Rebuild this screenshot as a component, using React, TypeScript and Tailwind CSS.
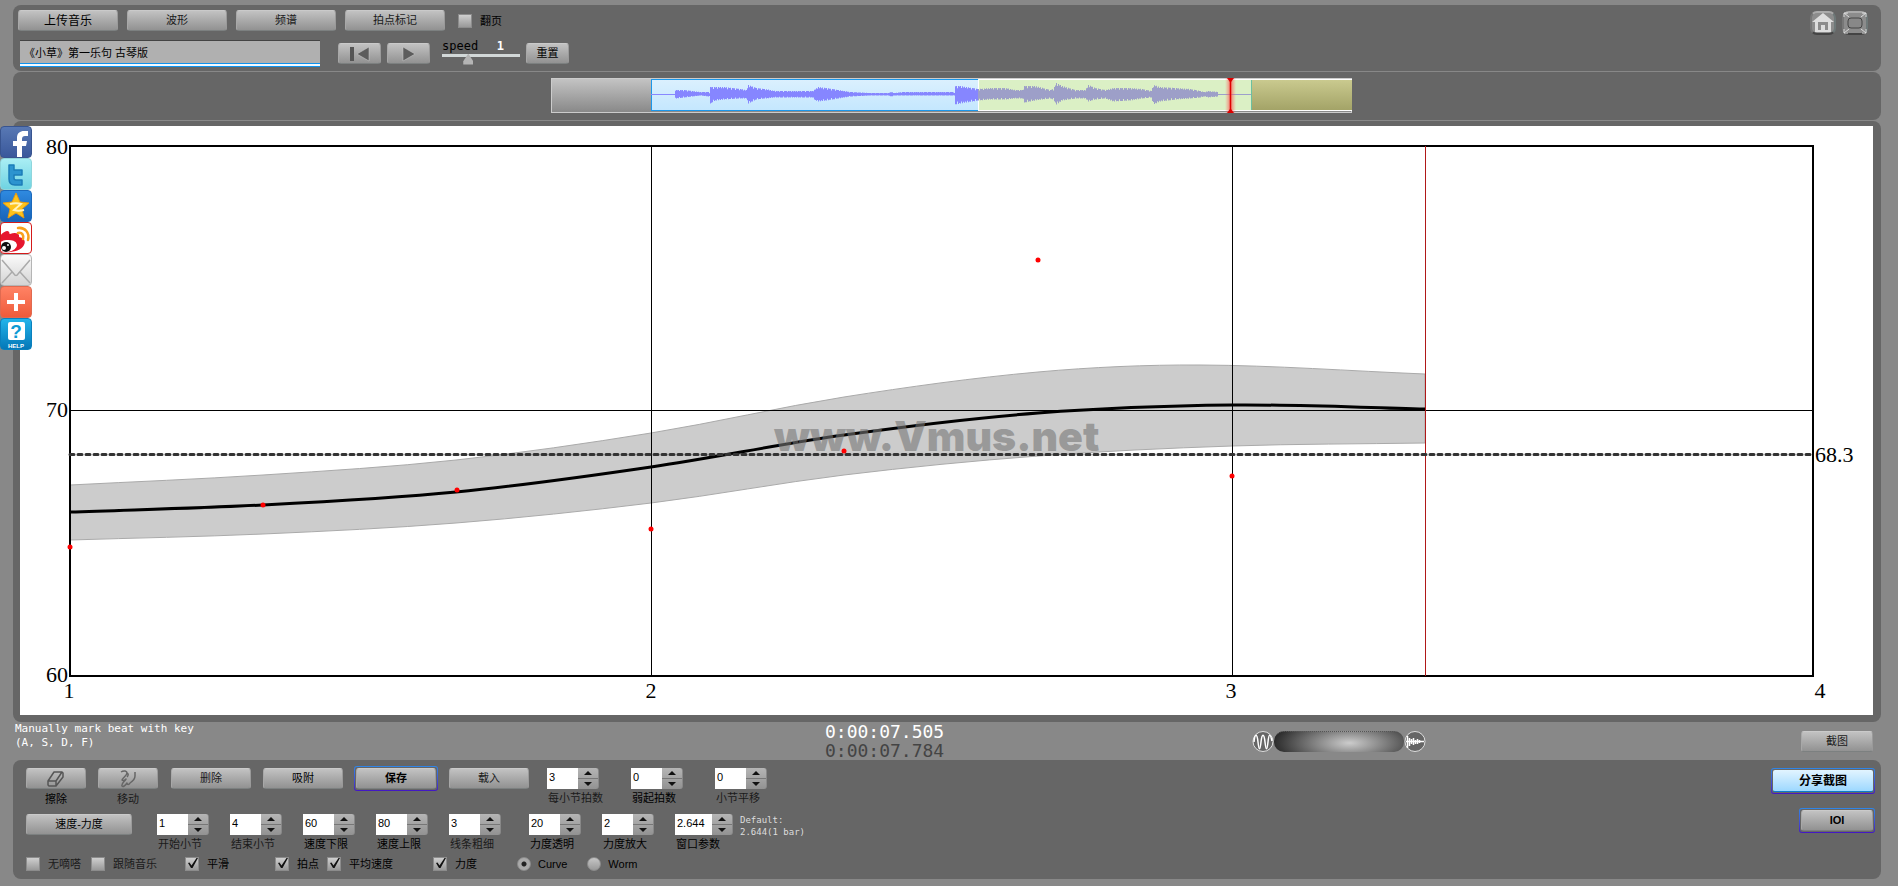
import { useState, type ReactNode } from "react";
import clsx from "clsx";

type Point = [number, number];

const MONO = "font-['DejaVu_Sans_Mono',monospace]";

// tempo chart, in chart units
const TEMPO: Point[] = [[50, 386], [243, 379], [436, 366], [631, 341], [824, 309], [1018, 287], [1212, 279], [1405, 283]];
const UPPER: Point[] = [[50, 359], [243, 349], [436, 334], [631, 307], [824, 271], [1018, 246], [1180, 239], [1405, 248]];
const LOWER: Point[] = [[50, 414], [243, 408], [436, 397], [631, 377], [824, 349], [1018, 330], [1212, 320], [1405, 317]];
const BEATS: Point[] = [[50, 421], [243, 379], [437, 364], [631, 403], [824, 325], [1018, 134], [1212, 350]];

// x, height above the axis, height below the axis
const ENVELOPE: [number, number, number][] = [
  [124, 4, 4], [132, 4, 3], [149, 2, 1], [157, 2, 2], [158, 1, 2], [159, 7, 9], [164, 7, 6], [172, 7, 5], [189, 5, 4], [195, 4, 4], [197, 9, 9],
  [205, 6, 5], [214, 5, 4], [224, 3, 3], [240, 3, 3], [261, 3, 3], [264, 5, 6], [267, 7, 7], [275, 6, 6], [287, 4, 4], [299, 2, 2], [319, 1, 1],
  [337, 1, 1], [340, 2, 2], [343, 1, 1], [352, 2, 1], [402, 2, 1], [403, 1, 1], [404, 8, 10], [409, 8, 9], [427, 5, 6], [439, 6, 5], [454, 6, 5],
  [464, 4, 4], [471, 4, 4], [473, 8, 8], [484, 8, 6], [499, 4, 4], [502, 5, 5], [505, 11, 10], [511, 8, 6], [524, 4, 4], [534, 4, 4], [537, 9, 7],
  [544, 6, 5], [554, 4, 4], [562, 6, 7], [579, 6, 6], [591, 5, 4], [600, 3, 3], [602, 9, 10], [609, 7, 7], [624, 6, 5], [639, 5, 4], [649, 3, 3],
  [653, 2, 2], [657, 3, 3], [667, 2, 2],
];

function spline(points: Point[]) {
  const slope = points.map((_, i) => {
    const a = points[Math.max(i - 1, 0)];
    const b = points[Math.min(i + 1, points.length - 1)];
    return (b[1] - a[1]) / (b[0] - a[0]);
  });
  return points.slice(1).map(([x, y], i) => {
    const [px, py] = points[i];
    const dx = (x - px) / 3;
    return `C${px + dx},${py + slope[i] * dx} ${x - dx},${y - slope[i + 1] * dx} ${x},${y}`;
  }).join(" ");
}

function wavePath() {
  let d = "";
  for (let i = 1; i < ENVELOPE.length; i++) {
    const [x0, u0, d0] = ENVELOPE[i - 1];
    const [x1, u1, d1] = ENVELOPE[i];
    for (let x = x0; x < x1; x++) {
      const t = (x - x0) / (x1 - x0);
      const grain = x % 2 ? 1 : 0.84 + 0.14 * Math.sin(x * 1.7);
      const up = (u0 + (u1 - u0) * t) * grain;
      const down = (d0 + (d1 - d0) * t) * grain;
      d += `M${x},${16 - up}h1V${16.5 + down}h-1z`;
    }
  }
  return d;
}

const BAND = `M${UPPER[0].join()} ${spline(UPPER)} L${LOWER[LOWER.length - 1].join()} ${spline([...LOWER].reverse())}Z`;
const WAVE = wavePath();

function Button({ children, className, ...rest }: { children: ReactNode; className?: string; "aria-label"?: string; onClick?: () => void }) {
  return (
    <button
      type="button"
      {...rest}
      className={clsx(
        "flex h-[21px] shrink-0 items-center justify-center rounded-[3px] border border-t-[#cacaca] border-r-[#9a9a9a] border-b-[#7c8080] border-l-[#a8a8a8] bg-linear-to-b from-[#c2c2c2] to-[#929292] leading-none hover:brightness-110",
        className ?? "w-[100px]",
      )}
    >
      {children}
    </button>
  );
}

function Ring({ children }: { children: ReactNode }) {
  return <div className="rounded-[3px] bg-linear-to-b from-[#2e86e8] to-[#4314c4] p-px"><div className="rounded-[2px] bg-[#666] p-px">{children}</div></div>;
}

function Check({ label, checked, className, dim }: { label: string; checked?: boolean; className?: string; dim?: boolean }) {
  return (
    <label className={clsx("relative flex items-center gap-2 leading-[14px]", dim && "text-[#1a1a1a]", className)}>
      <input type="checkbox" defaultChecked={checked} className="peer size-[14px] appearance-none border border-[#8c8c8c] bg-linear-to-b from-[#cfcfcf] to-[#999]" />
      <svg viewBox="0 0 14 14" className="pointer-events-none absolute left-0 top-0 hidden size-[14px] overflow-visible peer-checked:block">
        <path d="M3 6l1.500-.5 2 3L11.500 1h1.500L7.500 11h-1.500z" fill="#111" />
      </svg>
      {label}
    </label>
  );
}

function Radio({ label, checked, onChange, className }: { label: string; checked: boolean; onChange: () => void; className?: string }) {
  return (
    <label className={clsx("flex items-center gap-[7px] leading-[14px]", className)}>
      <input
        type="radio"
        name="view"
        checked={checked}
        onChange={onChange}
        className="size-[14px] appearance-none rounded-full border border-[#8c8c8c] bg-linear-to-b from-[#c6c6c6] to-[#999] checked:bg-[radial-gradient(circle,#222_2px,#aaa_3px)]"
      />
      {label}
    </label>
  );
}

function Stepper({ label, initial, step = 1, className, wide, dim }: { label: string; initial: string; step?: number; className?: string; wide?: boolean; dim?: boolean }) {
  const [value, setValue] = useState(initial);
  const bump = (by: number) => setValue((v) => String(Number((Number(v) + by).toFixed(3))));
  const arrow = "flex h-[10px] w-full items-center justify-center";
  return (
    <div className={clsx("shrink-0", className ?? "w-[73px]")}>
      <div className="flex h-[21px]">
        <input
          id={label}
          value={value}
          onChange={(e) => setValue(e.target.value)}
          className={clsx("h-[21px] bg-white pb-1 pl-[2px] text-[11px] leading-none outline-none", wide ? "w-[37px]" : "w-[31px]")}
        />
        <div className="flex w-[21px] flex-col justify-between rounded-r-[3px] border-r border-[#888] bg-linear-to-b from-[#b5b5b5] to-[#929292]">
          <button type="button" aria-label={`${label} +`} onClick={() => bump(step)} className={arrow}>
            <svg width="8" height="4"><path d="M4 0l4 4H0z" fill="#111" /></svg>
          </button>
          <div className="h-px bg-[#777]" />
          <button type="button" aria-label={`${label} -`} onClick={() => bump(-step)} className={arrow}>
            <svg width="8" height="4"><path d="M0 0h8L4 4z" fill="#111" /></svg>
          </button>
        </div>
      </div>
      <label htmlFor={label} className={clsx("mt-[3px] block pl-px whitespace-nowrap leading-[13px]", dim && "text-[#1a1a1a]")}>{label}</label>
    </div>
  );
}

function Overview() {
  return (
    <svg viewBox="0 0 801 35" className="block w-[801px] max-w-full">
      <defs>
        <linearGradient id="idle" x2="0" y2="1"><stop stopColor="#c4c4c4" /><stop offset="1" stopColor="#888" /></linearGradient>
        <linearGradient id="sky" x2="0" y2="1"><stop stopColor="#dbf0fe" /><stop offset="1" stopColor="#c4e7fe" /></linearGradient>
        <linearGradient id="olive" x2="0" y2="1"><stop stopColor="#cbcb90" /><stop offset="1" stopColor="#a2a266" /></linearGradient>
        <linearGradient id="glow"><stop stopColor="#f66" stopOpacity="0" /><stop offset=".5" stopColor="#f44" /><stop offset="1" stopColor="#f66" stopOpacity="0" /></linearGradient>
        <clipPath id="head"><path d="M0 0h427v35H0z" /></clipPath>
        <clipPath id="tail"><path d="M427 0h374v35H427z" /></clipPath>
      </defs>
      <rect x=".5" y=".5" width="800" height="34" fill="url(#idle)" stroke="#ccc" />
      <rect x="100.500" y="1.500" width="327" height="31" fill="url(#sky)" stroke="#1c97ea" />
      <rect x="427" y="1" width="273" height="32" fill="#dbf0c5" />
      <rect x="700" y="1" width="101" height="32" fill="url(#olive)" />
      <path d="M427.500 33V1.500H801M427 32.500H801" fill="none" stroke="#fff" />
      <path d="M700.500 2v30" stroke="#6cc0a0" />
      <path d="M100 16.500H427" stroke="#8888ff" />
      <path d="M427 16.500H700" stroke="#9d9fcb" />
      <path d={WAVE} fill="#8686ff" clipPath="url(#head)" />
      <path d={WAVE} fill="#9d9fc8" clipPath="url(#tail)" />
      <rect x="674" y="0" width="11" height="35" fill="url(#glow)" opacity=".7" />
      <path d="M679.500 0v35" stroke="#e00000" strokeWidth="1.500" />
      <path d="M676 0h7l-3 4h-1zM676 35h7l-3-4h-1z" fill="#d00" />
    </svg>
  );
}

function TempoChart() {
  return (
    <svg viewBox="0 0 1853 589" className="block h-auto w-full bg-white">
      <path d={BAND} fill="#ccc" stroke="#aaa" />
      <path d="M50 284.500H1793M631.500 20V550M1212.500 20V550" stroke="#000" />
      <rect x="50" y="20" width="1743" height="530" fill="none" stroke="#000" strokeWidth="2" />
      <path d={`M${TEMPO[0].join()} ${spline(TEMPO)}`} fill="none" stroke="#000" strokeWidth="3" />
      <text x="754" y="325" fill="#777" fillOpacity=".6" fontSize="41" fontWeight="900" fontFamily="Inter, sans-serif">www.Vmus.net</text>
      <path d="M1405.500 20V550" stroke="#b01818" />
      <path d="M50 328.500H1793" stroke="#333" strokeWidth="3" strokeDasharray="4 4" strokeLinecap="round" />
      {BEATS.map(([x, y]) => <circle key={x} cx={x} cy={y} r="2.500" fill="#f00" />)}
      <g fontFamily="Liberation Serif, serif" fontSize="22">
        <g textAnchor="end">
          <text x="48" y="28">80</text>
          <text x="48" y="291">70</text>
          <text x="48" y="556">60</text>
        </g>
        <g textAnchor="middle">
          <text x="49" y="572">1</text>
          <text x="631" y="572">2</text>
          <text x="1211" y="572">3</text>
          <text x="1800" y="572">4</text>
        </g>
        <text x="1795" y="336">68.3</text>
      </g>
    </svg>
  );
}

const SHARE: { name: string; tile: string; art: ReactNode }[] = [
  {
    name: "Facebook",
    tile: "bg-linear-to-b from-[#5878b4] to-[#3a589b] border-[#38548f]",
    art: <path d="M17 31V20h-4v-5h4v-3c0-5 3-7 7-7h4v5h-3c-2 0-3 1-3 3v2h5l-1 5h-4v11z" fill="#fff" />,
  },
  {
    name: "Twitter",
    tile: "bg-linear-to-b from-[#a9eef4] to-[#6fd3e2] border-[#8fd6dc]",
    art: <path d="M9 7h5v5h8v5h-8v3c0 2 1 2 2 2h6v5h-7c-4 0-6-2-6-6z" fill="#2c94cf" stroke="#1b7cb8" strokeLinejoin="round" strokeWidth="1.500" />,
  },
  {
    name: "Qzone",
    tile: "bg-linear-to-b from-[#2f8ae0] to-[#1763b8] border-[#1b68bb]",
    art: (
      <>
        <path d="M16 3l4 9 9 1-7 6 2 9-8-5-8 5 2-9-7-6 9-1z" fill="#fdc31c" stroke="#e89a10" />
        <path d="M10 14c4-1 8-1 11 0l-7 6c3 1 6 1 10 0" fill="none" stroke="#fff3c0" strokeWidth="2" />
      </>
    ),
  },
  {
    name: "Weibo",
    tile: "bg-white border-[#d41a1a]",
    art: (
      <>
        <path d="M0 14c4-5 8-6 9-4 1 1 0 2 1 2 5-2 10-1 9 3 5 1 7 4 5 8-3 6-12 8-24 7z" fill="#e6162d" />
        <ellipse cx="7" cy="24" rx="10" ry="6" fill="#fff" transform="rotate(-8 7 24)" />
        <circle cx="6" cy="25" r="5" fill="#111" />
        <circle cx="4" cy="26" r="2" fill="#fff" />
        <circle cx="8" cy="23" r="1" fill="#fff" />
        <path d="M18 6c7-1 12 5 10 12M18 11c4-1 6 2 5 6" fill="none" stroke="#f8a01c" strokeWidth="2.500" strokeLinecap="round" />
      </>
    ),
  },
  {
    name: "Mail",
    tile: "bg-linear-to-b from-[#fafafa] to-[#d4d4d4] border-[#b5b5b5]",
    art: <path d="M2 6l12 14c1 2 3 2 4 0L30 6M2 29l10-11M30 29L20 18" fill="none" stroke="#aaa" strokeWidth="1.500" />,
  },
  {
    name: "More",
    tile: "bg-linear-to-b from-[#ff8264] to-[#ee5a3a] border-[#e06a50]",
    art: <path d="M14 7h4v7h7v4h-7v7h-4v-7H7v-4h7z" fill="#fff" />,
  },
  {
    name: "Help",
    tile: "bg-linear-to-b from-[#22b4ea] to-[#0578b8] border-[#0a80bd]",
    art: (
      <>
        <rect x="8" y="4" width="17" height="18" rx="2" fill="#fff" />
        <text x="16" y="20" textAnchor="middle" fontSize="19" fontWeight="700" fill="#0d9ad4">?</text>
        <text x="16" y="30" textAnchor="middle" fontSize="6" fontWeight="700" fill="#fff">HELP</text>
      </>
    ),
  },
];

function ShareBar() {
  return (
    <nav className="absolute left-0 top-[126px] flex flex-col">
      {SHARE.map(({ name, tile, art }) => (
        <a key={name} href={`#${name.toLowerCase()}`} aria-label={name} className={clsx("size-8 overflow-hidden rounded-[4px] border", tile)}>
          <svg viewBox="1 1 30 30" className="size-full">{art}</svg>
        </a>
      ))}
    </nav>
  );
}

function CornerLink({ name, children }: { name: string; children: ReactNode }) {
  return (
    <a href={`#${name}`} aria-label={name} className="h-6 w-[26px] rounded-[7px] border-2 border-t-[#aaa] border-r-[#6e7878] border-b-[#444] border-l-[#777] bg-[#8c8c8c]">
      <svg viewBox="0 0 22 20" className="size-full overflow-visible">{children}</svg>
    </a>
  );
}

export default function App() {
  const [view, setView] = useState("Curve");
  const panel = "rounded-lg bg-[#666]";

  return (
    <div className="relative flex min-h-screen flex-col bg-[#888] pt-[5px] pr-[17px] pb-[7px] pl-[13px] font-['Liberation_Sans','Noto_Sans_CJK_SC',sans-serif] text-[11px] text-black">
      <header className={clsx(panel, "flex items-start justify-between px-[5px] pt-[5px] pb-1")}>
        <div>
          <div className="flex items-center gap-[9px]">
            <Button className="w-[100px] text-[12px]">上传音乐</Button>
            <Button className="w-[100px] text-[#1a1a1a]">波形</Button>
            <Button className="w-[100px] text-[#1a1a1a]">频谱</Button>
            <Button className="w-[100px] text-[#1a1a1a]">拍点标记</Button>
            <Check label="翻页" className="ml-1" />
          </div>
          <div className="mt-[9px] flex h-[27px] items-center pl-[2px]">
            <input
              aria-label="曲名"
              defaultValue="《小草》第一乐句 古琴版"
              className="h-[27px] w-[300px] border-t border-b border-t-[#444] border-b-[#0f93ee] bg-[#b0b0b0] px-1 pb-[3px] text-[11px] shadow-[inset_0_-2px_#f4faff,inset_0_-3px_#0f93ee] outline-none"
            />
            <Button className="ml-[18px] w-[43px]" aria-label="回到开头">
              <svg width="22" height="16"><path d="M1 1h4v14H1z" fill="#555" /><path d="M20 1v14L8 8z" fill="#5c5c5c" stroke="#ccc" strokeWidth=".5" /></svg>
            </Button>
            <Button className="ml-[6px] w-[43px]" aria-label="播放">
              <svg width="14" height="16"><path d="M1 1v14l12-7z" fill="#5c5c5c" stroke="#ccc" strokeWidth=".5" /></svg>
            </Button>
            <div className="ml-3 w-[78px] pb-1">
              <div className={clsx(MONO, "flex justify-between pr-4 text-[12px] leading-[15px]")}>
                <label htmlFor="speed">speed</label>
                <output className="font-bold text-white">1</output>
              </div>
              <input
                id="speed"
                type="range"
                min="0"
                max="3.2"
                step="0.1"
                defaultValue="1"
                className="block h-[11px] w-full appearance-none bg-[linear-gradient(#d2d8d8,#d2d8d8)] bg-[length:100%_3px] bg-top bg-no-repeat [&::-webkit-slider-thumb]:h-[11px] [&::-webkit-slider-thumb]:w-[10px] [&::-webkit-slider-thumb]:appearance-none [&::-webkit-slider-thumb]:bg-[#b4b4b4] [&::-webkit-slider-thumb]:[clip-path:polygon(50%_0,100%_70%,100%_100%,0_100%,0_70%)]"
              />
            </div>
            <Button className="ml-[6px] w-[43px]">重置</Button>
          </div>
        </div>
        <div className="flex gap-[6px] pt-px pr-2">
          <CornerLink name="home">
            <path d="M11 0L0 9h3v10h16V9h3zM6 9h10v8h-3v-5H9v5H6z" fill="#ddd" fillRule="evenodd" />
          </CornerLink>
          <CornerLink name="fullscreen">
            <rect x="4" y="5" width="14" height="10" rx="3" fill="#888" stroke="#444" />
            <path d="M0 0l5 4M0 4V0h4M22 0l-5 4M18 0h4v4M0 20l5-4M0 16v4h4M22 20l-5-4M18 20h4v-4" fill="none" stroke="#ddd" />
          </CornerLink>
        </div>
      </header>

      <section className={clsx(panel, "mt-px flex h-[48px] items-start justify-center pt-[6px] pl-[9px]")}>
        <Overview />
      </section>

      <main className={clsx(panel, "mt-px pt-[5px] pr-2 pb-[7px] pl-[7px]")}>
        <TempoChart />
      </main>

      <div className="grid h-[38px] grid-cols-[812fr_427fr_629fr]">
        <p className={clsx(MONO, "pl-[2px] text-[11px] leading-[14px] text-white")}>Manually mark beat with key<br />(A, S, D, F)</p>
        <div className={clsx(MONO, "text-[18px] leading-[19px]")}>
          <p className="text-white">0:00:07.505</p>
          <p className="text-[#444]">0:00:07.784</p>
        </div>
        <div className="flex items-center justify-between pr-2">
          <div className="flex items-center">
            <svg width="22" height="23" viewBox="0 0 22 23" className="shrink-0">
              <circle cx="11" cy="11.500" r="10" fill="#666" stroke="#ddd" />
              <path d="M2 12C3 3 5 3 6 12s2 9 3 0 3-9 4 0 2 9 3 0 2-9 4-1" fill="none" stroke="#fff" strokeWidth="1.500" />
            </svg>
            <div className="h-[21px] w-[130px] rounded-[10px] border-t border-dotted border-[#555] bg-[radial-gradient(ellipse_80px_28px_at_58%_55%,#ccc,#888_40%,#222)]" />
            <svg width="22" height="23" viewBox="0 0 22 23" className="shrink-0">
              <circle cx="11" cy="11.500" r="10" fill="#666" stroke="#ddd" />
              <path d="M3.500 6v12M5.500 8v8M7.500 9v5M9.500 8v7M11.500 10v4M13.500 9v5M15.500 10v3M2 11.500h18" stroke="#fff" strokeWidth="1.500" />
            </svg>
          </div>
          <Button className="w-[72px] text-[#1a1a1a]">截图</Button>
        </div>
      </div>

      <footer className={clsx(panel, "flex items-start justify-between pt-[6px] pr-[6px] pb-2 pl-[13px]")}>
        <div className="pt-[2px]">
          <div className="flex h-[38px] items-start">
            <div className="w-[60px] text-center leading-[13px]">
              <Button className="mb-1 w-[60px]" aria-label="擦除">
                <svg width="18" height="16" fill="none" stroke="#555" strokeWidth="1.500" strokeLinejoin="round"><path d="M7 1h8L9 10H1zM1 10v4l1 1h7l7-9V2l-1-1M9 10v5" /></svg>
              </Button>
              擦除
            </div>
            <div className="ml-3 w-[60px] text-center leading-[13px] text-[#1a1a1a]">
              <Button className="mb-1 w-[60px]" aria-label="移动">
                <svg width="18" height="18" fill="none" stroke="#666" strokeWidth="1.500" strokeLinejoin="round">
                  <path d="M2 2c3-2 6-1 6 1 0 3-5 5-5 7 1 1 3 0 4-1-2 3-5 5-4 7 1 1 3 0 5-3 0 2 2 2 3 0 3-2 5-4 5-7V2M8 3c2 1 1 3 0 4" />
                </svg>
              </Button>
              移动
            </div>
            <Button className="ml-[13px] w-[80px] text-[#1a1a1a]">删除</Button>
            <Button className="ml-3 w-[80px]">吸附</Button>
            <div className="-mt-[2px] ml-[11px]"><Ring><Button className="w-[80px] font-bold">保存</Button></Ring></div>
            <Button className="mr-[18px] ml-[11px] w-[80px] text-[#1a1a1a]">载入</Button>
            <Stepper label="每小节拍数" initial="3" className="w-[84px]" dim />
            <Stepper label="弱起拍数" initial="0" className="w-[84px]" />
            <Stepper label="小节平移" initial="0" className="w-[84px]" dim />
          </div>

          <div className="mt-2 flex h-[38px] items-start">
            <Button className="mr-[25px] w-[106px]">速度-力度</Button>
            <Stepper label="开始小节" initial="1" dim />
            <Stepper label="结束小节" initial="4" dim />
            <Stepper label="速度下限" initial="60" />
            <Stepper label="速度上限" initial="80" />
            <Stepper label="线条粗细" initial="3" className="w-[80px]" dim />
            <Stepper label="力度透明" initial="20" />
            <Stepper label="力度放大" initial="2" />
            <Stepper label="窗口参数" initial="2.644" step={0.001} className="w-[65px]" wide />
            <p className={clsx(MONO, "text-[9px] leading-[12px] text-[#ddd]")}>Default:<br />2.644(1 bar)</p>
          </div>

          <div className="mt-[5px] flex items-center">
            <Check label="无嘀嗒" dim />
            <Check label="跟随音乐" className="ml-[10px]" dim />
            <Check label="平滑" checked className="ml-7" />
            <Check label="拍点" checked className="ml-[46px]" />
            <Check label="平均速度" checked className="ml-2" />
            <Check label="力度" checked className="ml-10" />
            <Radio label="Curve" checked={view === "Curve"} onChange={() => setView("Curve")} className="ml-10" />
            <Radio label="Worm" checked={view === "Worm"} onChange={() => setView("Worm")} className="ml-5" />
          </div>
        </div>

        <div className="flex flex-col items-end gap-[14px] pt-[2px]">
          <Ring>
            <button type="button" className="flex h-[22px] w-[100px] items-center justify-center rounded-[2px] border-b border-[#0a7ec8] bg-linear-to-b from-[#e2f4ff] to-[#9dd8ff] text-[12px] leading-none font-bold">分享截图</button>
          </Ring>
          <Ring><Button className="w-[72px] font-bold">IOI</Button></Ring>
        </div>
      </footer>

      <ShareBar />
    </div>
  );
}
